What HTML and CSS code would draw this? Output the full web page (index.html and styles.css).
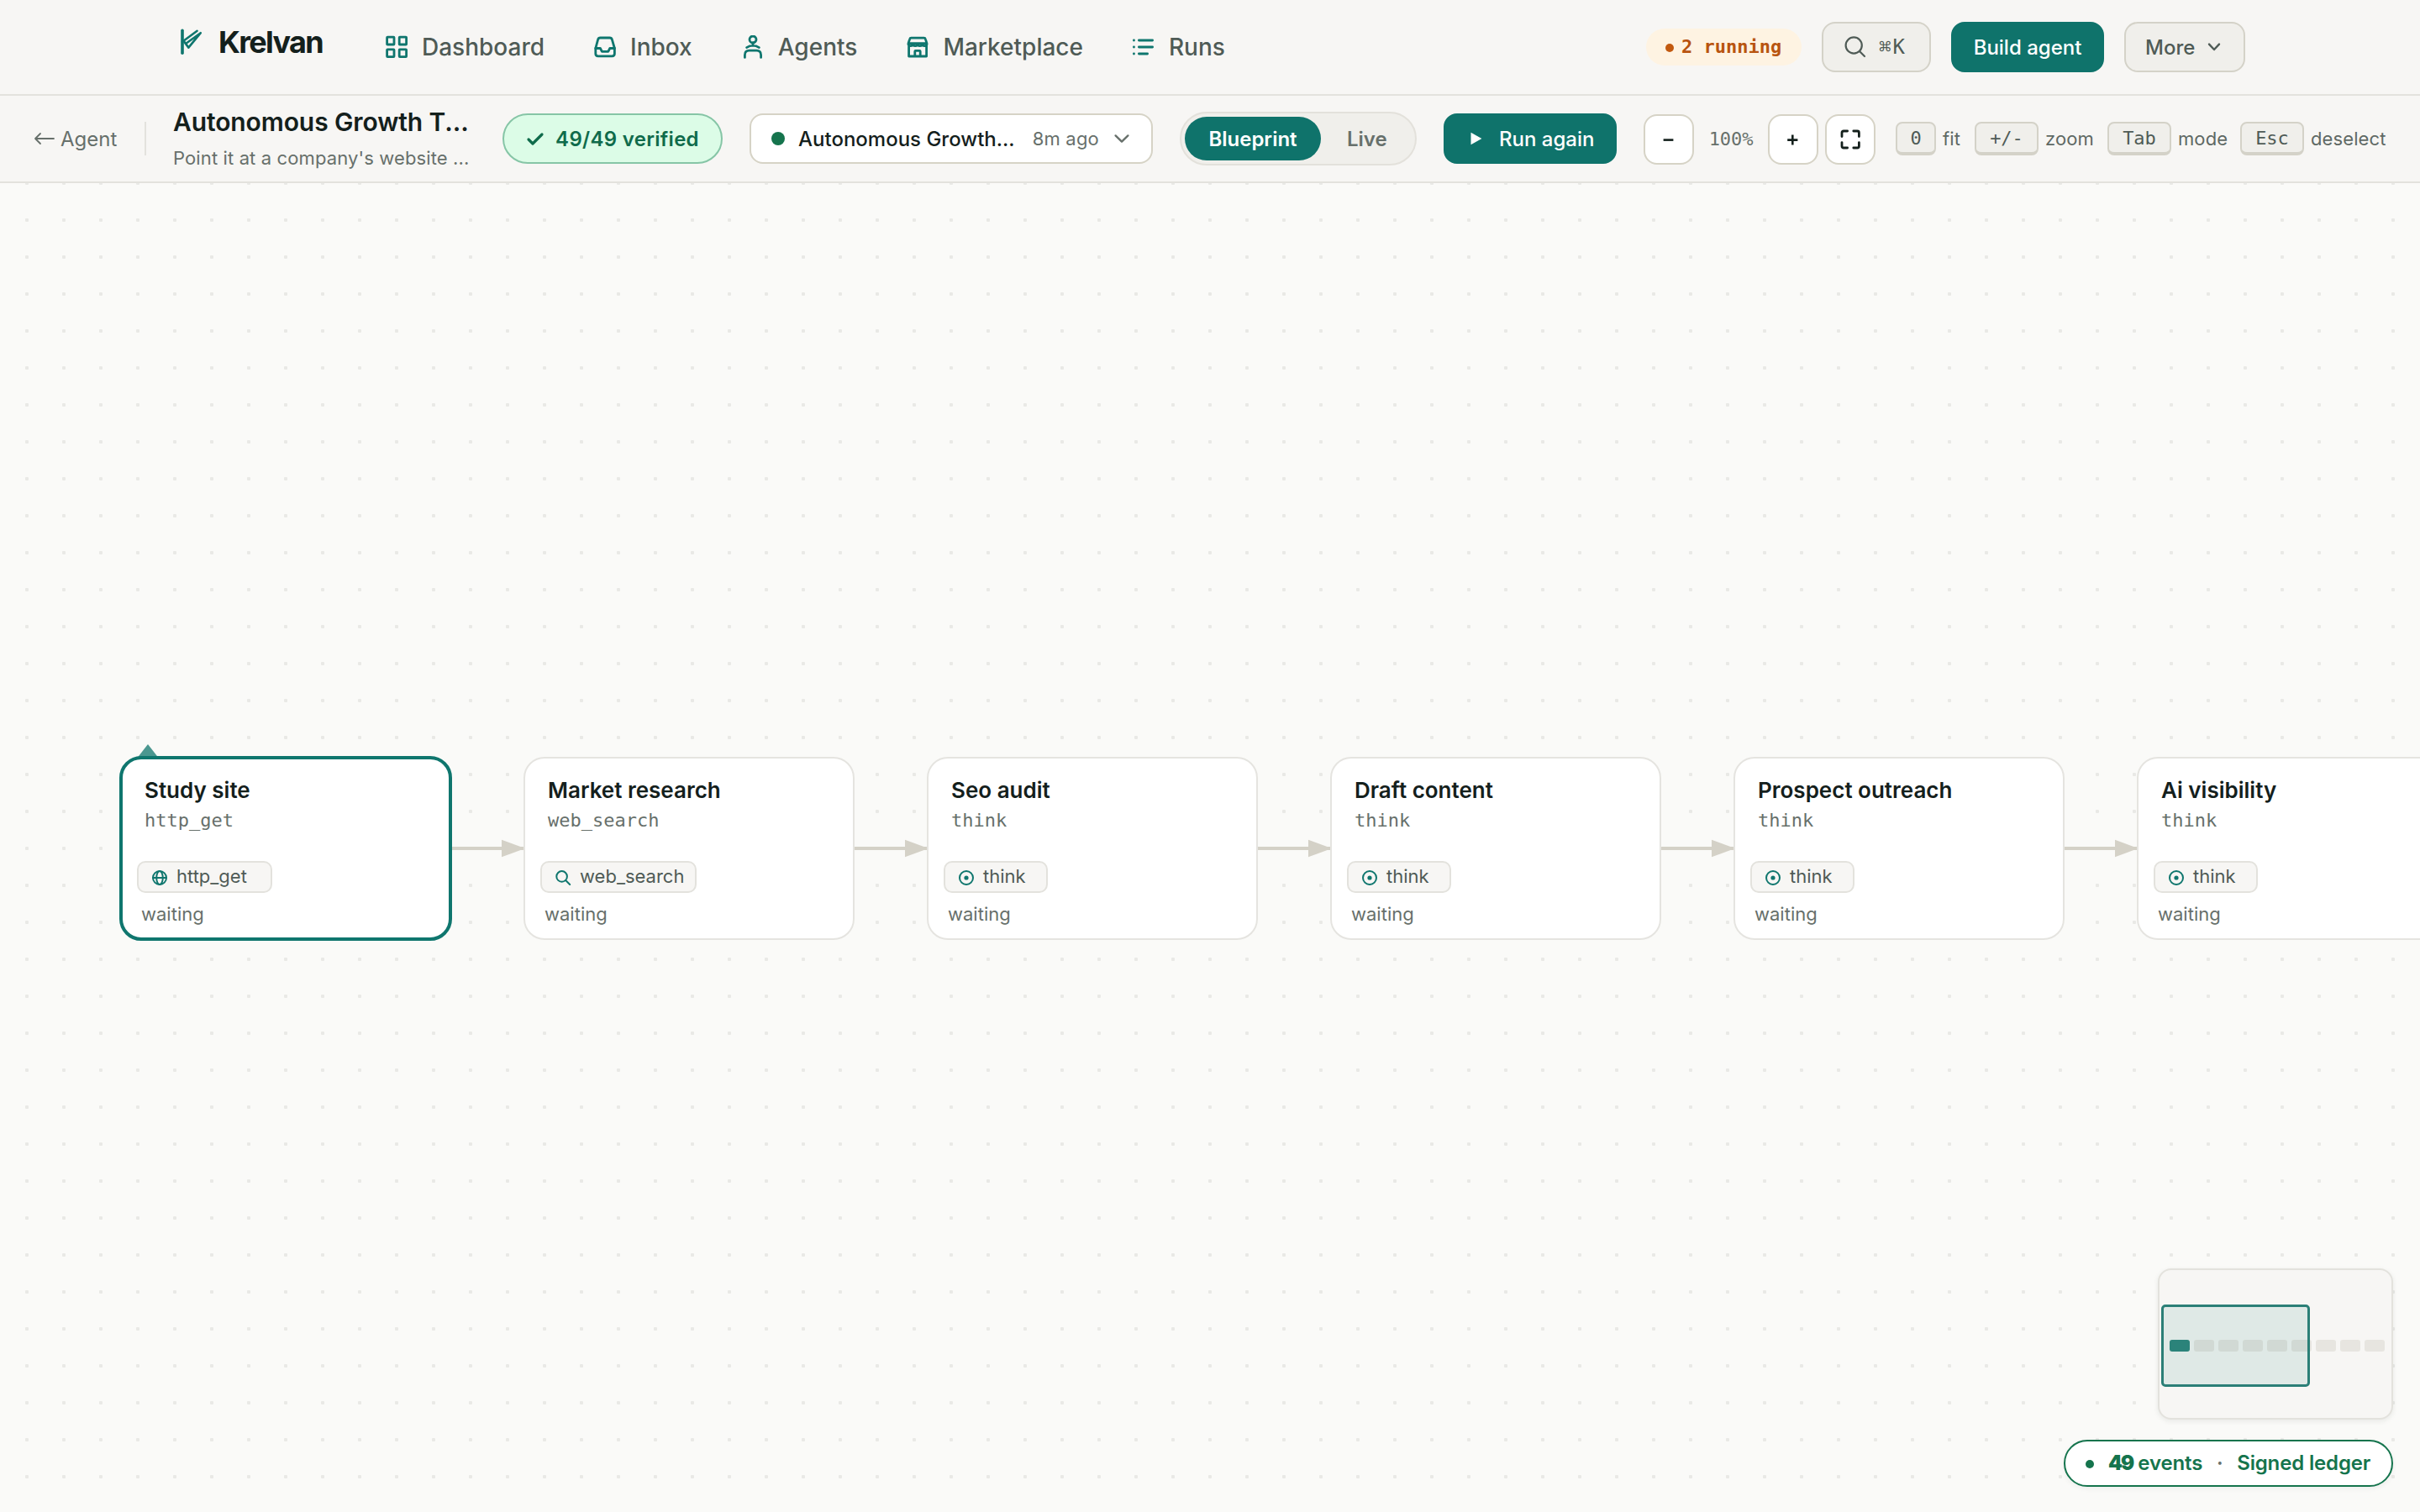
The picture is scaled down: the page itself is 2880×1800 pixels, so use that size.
FILE: index.html
```html
<!DOCTYPE html>
<html lang="en">
<head>
    <meta charset="UTF-8">
    <meta name="viewport" content="width=device-width, initial-scale=1.0">
    <title>Krelvan - Autonomous Growth Team</title>
    <link rel="stylesheet" href="styles.css">
</head>
<body>
    <svg class="sprite" width="0" height="0">
        <symbol id="i-think" viewBox="0 0 20 20">
            <circle cx="10" cy="10" r="8"/>
            <circle cx="10" cy="10" r="2.6" fill="currentColor" stroke="none"/>
        </symbol>
        <symbol id="i-globe" viewBox="0 0 20 20">
            <circle cx="10" cy="10" r="8"/>
            <ellipse cx="10" cy="10" rx="3.8" ry="8"/>
            <path d="M2 10h16"/>
        </symbol>
        <symbol id="i-search" viewBox="0 0 20 20">
            <circle cx="8.6" cy="8.4" r="6.3"/>
            <path d="M13.2 13l5 5"/>
        </symbol>
    </svg>

    <header class="header">
        <a class="logo">
            <svg class="logo-mark" viewBox="0 0 28 32">
                <path class="logo-stem" d="M2 2.2v27"/>
                <path d="M2 15.8L19.6 2.8M4 15.4L9.4 22.6L23.8 5.2L6 18"/>
            </svg>
            <span class="logo-text">Krelvan</span>
        </a>
        <nav class="nav">
            <a class="nav-item">
                <svg class="nav-icon" viewBox="0 0 28 28">
                    <rect x="2.6" y="2.2" width="8.4" height="8.8" rx="0.6"/>
                    <rect x="17.2" y="2.2" width="8.4" height="8.8" rx="0.6"/>
                    <rect x="2.6" y="16.8" width="8.4" height="8.8" rx="0.6"/>
                    <rect x="17.2" y="16.8" width="8.4" height="8.8" rx="0.6"/>
                </svg>
                Dashboard
            </a>
            <a class="nav-item">
                <svg class="nav-icon" viewBox="0 0 28 28">
                    <path d="M2.8 15.5L5.6 5.2Q6.2 3 8.4 3H19.6Q21.8 3 22.4 5.2L25.4 15.5V21.8Q25.4 24.8 22.4 24.8H5.8Q2.8 24.8 2.8 21.8Z"/>
                    <path d="M2.8 15.5H8.4L10.4 19.4H17.8L19.8 15.5H25.4"/>
                </svg>
                Inbox
            </a>
            <a class="nav-item">
                <svg class="nav-icon" viewBox="0 0 28 28">
                    <circle cx="14" cy="5" r="4"/>
                    <path d="M14 9v3.4M6.6 14.6Q14 9.8 21.4 14.6M4.4 26.4V23.4Q4.4 18.2 9.6 18.2H18.4Q23.6 18.2 23.6 23.4V26.4"/>
                </svg>
                Agents
            </a>
            <a class="nav-item">
                <svg class="nav-icon" viewBox="0 0 28 28">
                    <path d="M3 9.6L4.6 4.6Q5 3.2 6.4 3.2H21.6Q23 3.2 23.4 4.6L25 9.6ZM3 9.6V11Q5.6 14.4 8.4 11Q11.2 14.4 14 11Q16.8 14.4 19.6 11Q22.4 14.4 25 11V9.6M3.6 12V25H24.6V12M10.8 25V19.2Q10.8 18.4 11.6 18.4H16.4Q17.2 18.4 17.2 19.2V25"/>
                </svg>
                Marketplace
            </a>
            <a class="nav-item">
                <svg class="nav-icon" viewBox="0 0 28 28">
                    <path d="M8.4 6H24.6M8.4 14H24.6M8.4 22H18.6M2.4 6h.1M2.4 14h.1M2.4 22h.1"/>
                </svg>
                Runs
            </a>
        </nav>
        <div class="header-actions">
            <span class="running"><i class="running-dot"></i>2 running</span>
            <button class="btn btn-search">
                <svg class="search-icon" viewBox="0 0 28 28">
                    <circle cx="12.2" cy="12" r="9.6"/>
                    <path d="M19 19l6 6"/>
                </svg>
                <span class="shortcut">⌘K</span>
            </button>
            <button class="btn btn-primary btn-build">Build agent</button>
            <button class="btn btn-more">
                More
                <svg class="chevron" viewBox="0 0 20 20"><path d="M4 6.6l6 6.4l6-6.4"/></svg>
            </button>
        </div>
    </header>

    <div class="toolbar">
        <a class="back">
            <svg class="back-arrow" viewBox="0 0 26 20"><path d="M24 10H2M8 4L2 10L8 16"/></svg>
            Agent
        </a>
        <div class="divider"></div>
        <div class="title-block">
            <h1 class="title">Autonomous Growth T...</h1>
            <p class="subtitle">Point it at a company's website ...</p>
        </div>
        <div class="verified">
            <svg class="check" viewBox="0 0 22 20"><path d="M3 11l5 5L19 5"/></svg>
            49/49 verified
        </div>
        <div class="run-select">
            <i class="run-dot"></i>
            <span class="run-name">Autonomous Growth...</span>
            <span class="run-time">8m ago</span>
            <svg class="chevron" viewBox="0 0 20 20"><path d="M2.6 6.4l7.4 7.2l7.4-7.2"/></svg>
        </div>
        <div class="mode">
            <button class="mode-btn mode-active">Blueprint</button>
            <button class="mode-btn">Live</button>
        </div>
        <button class="btn btn-primary btn-run">
            <svg class="play" viewBox="0 0 14 16"><path d="M0.5 0.8L13.4 8L0.5 15.2Z"/></svg>
            Run again
        </button>
        <div class="zoom">
            <button class="zoom-btn"><svg class="zoom-icon" viewBox="0 0 28 28"><path d="M7.6 14.6H19.4"/></svg></button>
            <span class="zoom-value">100%</span>
            <button class="zoom-btn"><svg class="zoom-icon" viewBox="0 0 28 28"><path d="M7.2 14.6H19.4M13.3 8.6V20.6"/></svg></button>
            <button class="zoom-btn"><svg class="zoom-icon fit-icon" viewBox="0 0 28 28"><path d="M4 10.6V6Q4 4 6 4H10.6M17.8 4H22.4Q24.4 4 24.4 6V10.6M24.4 17.6V22Q24.4 24 22.4 24H17.8M10.6 24H6Q4 24 4 22V17.6"/></svg></button>
        </div>
        <div class="hints">
            <kbd class="key key-small">0</kbd><span class="hint hint-fit">fit</span>
            <kbd class="key">+/-</kbd><span class="hint hint-zoom">zoom</span>
            <kbd class="key">Tab</kbd><span class="hint hint-mode">mode</span>
            <kbd class="key">Esc</kbd><span class="hint">deselect</span>
        </div>
    </div>

    <main class="canvas">
        <svg class="edges" viewBox="0 0 2880 1582">
            <defs>
                <marker id="arrow" markerUnits="userSpaceOnUse" markerWidth="28" markerHeight="22" refX="27" refY="11" orient="auto">
                    <path d="M0 0.7L28 11L0 21.3Z" fill="#d4d1c7" stroke="none"/>
                </marker>
            </defs>
            <path class="entry" d="M176 668L190 686H162Z"/>
            <path class="edge" d="M536 792H624"/>
            <path class="edge" d="M1016 792H1104"/>
            <path class="edge" d="M1496 792H1584"/>
            <path class="edge" d="M1976 792H2064"/>
            <path class="edge" d="M2456 792H2544"/>
        </svg>

        <div class="node node-1 selected">
            <h2 class="node-title">Study site</h2>
            <p class="node-type">http_get</p>
            <span class="chip chip-http"><svg class="chip-icon"><use href="#i-globe"/></svg>http_get</span>
            <p class="node-status">waiting</p>
        </div>
        <div class="node node-2">
            <h2 class="node-title">Market research</h2>
            <p class="node-type">web_search</p>
            <span class="chip chip-web"><svg class="chip-icon"><use href="#i-search"/></svg>web_search</span>
            <p class="node-status">waiting</p>
        </div>
        <div class="node node-3">
            <h2 class="node-title">Seo audit</h2>
            <p class="node-type">think</p>
            <span class="chip chip-think"><svg class="chip-icon"><use href="#i-think"/></svg>think</span>
            <p class="node-status">waiting</p>
        </div>
        <div class="node node-4">
            <h2 class="node-title">Draft content</h2>
            <p class="node-type">think</p>
            <span class="chip chip-think"><svg class="chip-icon"><use href="#i-think"/></svg>think</span>
            <p class="node-status">waiting</p>
        </div>
        <div class="node node-5">
            <h2 class="node-title">Prospect outreach</h2>
            <p class="node-type">think</p>
            <span class="chip chip-think"><svg class="chip-icon"><use href="#i-think"/></svg>think</span>
            <p class="node-status">waiting</p>
        </div>
        <div class="node node-6">
            <h2 class="node-title">Ai visibility</h2>
            <p class="node-type">think</p>
            <span class="chip chip-think"><svg class="chip-icon"><use href="#i-think"/></svg>think</span>
            <p class="node-status">waiting</p>
        </div>

        <div class="overlay">
            <div class="minimap">
                <div class="mini-nodes">
                    <i class="mini-node mini-active"></i>
                    <i class="mini-node"></i>
                    <i class="mini-node"></i>
                    <i class="mini-node"></i>
                    <i class="mini-node"></i>
                    <i class="mini-node"></i>
                    <i class="mini-node"></i>
                    <i class="mini-node"></i>
                    <i class="mini-node"></i>
                </div>
                <div class="mini-view"></div>
            </div>
            <div class="ledger">
                <i class="ledger-dot"></i>
                <span><b class="ledger-count">49</b> events</span>
                <span class="ledger-sep">·</span>
                <span>Signed ledger</span>
            </div>
        </div>
    </main>
</body>
</html>
```
FILE: styles.css
```css
* {
    box-sizing: border-box;
}

body {
    margin: 0;
    height: 1800px;
    display: flex;
    flex-direction: column;
    overflow: hidden;
    font-family: Inter, "Liberation Sans", sans-serif;
    color: #14201c;
    background-color: #fafaf8;
}

h1, h2, p {
    margin: 0;
}

button {
    font-family: inherit;
    padding: 0;
    cursor: pointer;
}

svg {
    fill: none;
    stroke: currentColor;
    stroke-linecap: round;
    stroke-linejoin: round;
    flex: none;
}

.sprite {
    display: none;
}

/* Header */
.header {
    height: 114px;
    flex: none;
    display: flex;
    align-items: center;
    padding: 0 208px;
    background-color: #f7f6f4;
    border-bottom: 2px solid #e3e2dd;
}

.logo {
    width: 250px;
    display: flex;
    align-items: center;
    padding: 0 0 12px 7px;
}

.logo-mark {
    width: 28px;
    height: 32px;
    color: #0f766e;
    stroke-width: 2.6;
}

.logo-stem {
    stroke-width: 3.6;
}

.logo-text {
    margin-left: 17px;
    font-size: 36px;
    line-height: 40px;
    font-weight: 700;
    letter-spacing: -1.7px;
}

.nav {
    display: flex;
    gap: 58px;
}

.nav-item {
    display: flex;
    align-items: center;
    gap: 16px;
    font-size: 28px;
    line-height: 36px;
    font-weight: 500;
    color: #4f5b56;
}

.nav-icon {
    width: 28px;
    height: 28px;
    color: #0f766e;
    stroke-width: 2.8;
}

.header-actions {
    margin-left: auto;
    display: flex;
    align-items: center;
    gap: 24px;
}

.running {
    width: 185px;
    height: 44px;
    display: flex;
    align-items: center;
    padding: 0 0 2px 23px;
    gap: 9px;
    border-radius: 22px;
    background-color: #fef3e2;
    color: #b8540f;
    font-family: "DejaVu Sans Mono", "Liberation Mono", monospace;
    font-size: 22px;
    font-weight: 700;
}

.running-dot {
    width: 10px;
    height: 10px;
    margin-top: 4px;
    border-radius: 50%;
    background-color: #c2590f;
}

.btn {
    height: 60px;
    display: flex;
    align-items: center;
    border: 2px solid #d4d2c8;
    border-radius: 16px;
    background-color: #f0efeb;
    color: #4f5b56;
    font-size: 24px;
    font-weight: 500;
    white-space: nowrap;
}

.btn-primary {
    border-color: #0f736b;
    background-color: #0f736b;
    color: #fff;
}

.btn-search {
    width: 130px;
    padding-left: 24px;
    gap: 14px;
}

.search-icon {
    width: 28px;
    height: 28px;
    stroke-width: 2.2;
}

.shortcut {
    font-family: "DejaVu Sans Mono", monospace;
    font-size: 24px;
    font-weight: 400;
    letter-spacing: 2px;
}

.btn-build {
    width: 182px;
    justify-content: center;
}

.btn-more {
    width: 144px;
    padding-left: 23px;
    gap: 13px;
}

.chevron {
    width: 20px;
    height: 20px;
    stroke-width: 2.4;
}

/* Toolbar */
.toolbar {
    height: 104px;
    flex: none;
    display: flex;
    align-items: center;
    padding: 0 40px;
    background-color: #f7f6f4;
    border-bottom: 2px solid #e3e2dd;
    white-space: nowrap;
}

.back {
    width: 132px;
    display: flex;
    align-items: center;
    gap: 6px;
    font-size: 24px;
    color: #67706b;
}

.back-arrow {
    width: 26px;
    height: 20px;
    stroke-width: 1.8;
}

.divider {
    width: 2px;
    height: 40px;
    margin-right: 32px;
    background-color: #e3e2dd;
}

.title-block {
    width: 392px;
}

.title {
    font-size: 30px;
    line-height: 38px;
    font-weight: 600;
    letter-spacing: -0.1px;
}

.subtitle {
    margin: 10px 0 3px;
    font-size: 22px;
    line-height: 28px;
    letter-spacing: 0.12px;
    color: #67706b;
}

.verified {
    width: 262px;
    height: 60px;
    margin-right: 32px;
    display: flex;
    align-items: center;
    justify-content: center;
    gap: 13px;
    border: 2px solid #86c5a6;
    border-radius: 30px;
    background-color: #dcfce7;
    color: #0f6b4b;
    font-size: 24px;
    font-weight: 600;
    letter-spacing: 0.3px;
}

.check {
    width: 22px;
    height: 20px;
    stroke-width: 3.2;
}

.run-select {
    width: 480px;
    height: 60px;
    margin-right: 32px;
    display: flex;
    align-items: center;
    padding: 0 25px 0 24px;
    border: 2px solid #d6d3c6;
    border-radius: 16px;
    background-color: #fff;
    color: #67706b;
}

.run-dot {
    width: 16px;
    height: 16px;
    border-radius: 50%;
    background-color: #15744d;
}

.run-name {
    margin-left: 16px;
    color: #14201c;
    font-size: 24px;
    font-weight: 500;
}

.run-time {
    margin-left: auto;
    margin-right: 17px;
    font-size: 22px;
    letter-spacing: 0.2px;
}

.mode {
    width: 282px;
    height: 64px;
    margin-right: 32px;
    display: flex;
    align-items: center;
    padding: 0 4px;
    border: 2px solid #e3e1db;
    border-radius: 32px;
    background-color: #f0efeb;
}

.mode-btn {
    flex: none;
    height: 52px;
    padding: 0 31px;
    border: none;
    border-radius: 26px;
    background: none;
    color: #67706b;
    font-size: 24px;
    font-weight: 600;
}

.mode-active {
    width: 162px;
    padding: 0;
    background-color: #0f736b;
    color: #fff;
}

.btn-run {
    width: 206px;
    margin-right: 32px;
    padding-left: 30px;
    gap: 20px;
}

.play {
    width: 14px;
    height: 16px;
    fill: #fff;
    stroke: none;
}

.zoom {
    display: flex;
    align-items: center;
    gap: 8px;
    margin: 2px 24px 0 0;
}

.zoom-btn {
    width: 60px;
    height: 60px;
    display: flex;
    align-items: center;
    justify-content: center;
    border: 2px solid #d6d3c6;
    border-radius: 16px;
    background-color: #fff;
    color: #14201c;
}

.zoom-icon {
    width: 28px;
    height: 28px;
    stroke-width: 2.6;
    stroke-linecap: butt;
}

.fit-icon {
    stroke-width: 2.8;
    stroke-linecap: round;
}

.zoom-value {
    width: 72px;
    margin-top: -2px;
    text-align: center;
    font-family: "DejaVu Sans Mono", monospace;
    font-size: 22px;
    letter-spacing: -0.1px;
    color: #67706b;
}

.hints {
    flex: 1;
    display: flex;
    align-items: center;
    font-size: 22px;
    letter-spacing: 0.1px;
    color: #5f6964;
}

.key {
    width: 76px;
    height: 40px;
    border: 2px solid #d4d2c8;
    border-bottom-width: 4px;
    border-radius: 8px;
    background-color: #f0efeb;
    color: #4f5b56;
    text-align: center;
    font-family: "DejaVu Sans Mono", monospace;
    font-size: 22px;
    line-height: 35px;
    letter-spacing: 0;
}

.key-small {
    width: 48px;
}

.hint {
    margin-left: 8px;
}

.hint-fit {
    width: 38px;
}

.hint-zoom {
    width: 74px;
}

.hint-mode {
    width: 74px;
}

/* Canvas */
.canvas {
    position: relative;
    flex: 1;
    overflow: hidden;
    background-image: radial-gradient(circle at 22px 22px, #e9e9e6 2px, transparent 2.5px);
    background-size: 44px 44px;
    background-position: 10px 22px;
}

.edges {
    position: absolute;
    left: 0;
    top: 0;
    width: 2880px;
    height: 1582px;
}

.edge {
    stroke: #d4d1c7;
    stroke-width: 4;
    stroke-linecap: butt;
    marker-end: url(#arrow);
}

.entry {
    fill: #4b9790;
    stroke: none;
}

.node {
    position: absolute;
    top: 683px;
    width: 394px;
    height: 218px;
    padding: 22px 0 0 27px;
    border: 2px solid #e5e4e0;
    border-radius: 25px;
    background-color: #fff;
}

.node-1 { left: 143px; }
.node-2 { left: 623px; }
.node-3 { left: 1103px; }
.node-4 { left: 1583px; }
.node-5 { left: 2063px; }
.node-6 { left: 2543px; }

.selected {
    margin: -1px;
    width: 396px;
    height: 220px;
    padding: 21px 0 0 26px;
    border: 4px solid #0f766e;
    border-radius: 26px;
}

.node-title {
    font-size: 26px;
    line-height: 32px;
    font-weight: 600;
}

.node-type {
    margin-top: 6px;
    font-family: "DejaVu Sans Mono", monospace;
    font-size: 22px;
    line-height: 28px;
    color: #67706b;
}

.chip {
    height: 38px;
    margin: 34px 0 0 -9px;
    display: flex;
    align-items: center;
    gap: 10px;
    padding: 0 0 2px 15px;
    border: 2px solid #e3e2dd;
    border-radius: 10px;
    background-color: #f7f6f4;
    color: #4f5b56;
    font-size: 22px;
    line-height: 26px;
}

.chip-http { width: 161px; }
.chip-web { width: 186px; }
.chip-think { width: 124px; }

.chip-icon {
    width: 20px;
    height: 20px;
    margin-top: 3px;
    color: #0f766e;
    stroke-width: 2;
}

.node-status {
    margin: 11px 0 0 -4px;
    font-size: 22px;
    line-height: 28px;
    color: #67706b;
}

/* Minimap and ledger sit over the canvas */
.overlay {
    position: absolute;
    right: 32px;
    bottom: 30px;
    display: flex;
    flex-direction: column;
    align-items: flex-end;
    gap: 24px;
}

.minimap {
    position: relative;
    width: 280px;
    height: 180px;
    display: flex;
    align-items: center;
    padding-left: 12px;
    border: 2px solid #e3e2dd;
    border-radius: 16px;
    background-color: #f7f6f4;
    box-shadow: 0 2px 6px rgba(20, 32, 28, 0.08);
}

.mini-nodes {
    display: flex;
    gap: 5px;
    margin-top: 4px;
}

.mini-node {
    width: 24px;
    height: 14px;
    border-radius: 3px;
    background-color: #e7e5e0;
}

.mini-active {
    background-color: #2e857c;
}

.mini-view {
    position: absolute;
    left: 2px;
    top: 41px;
    width: 177px;
    height: 98px;
    border: 3px solid #2b7f77;
    border-radius: 5px;
    background-color: rgba(15, 118, 110, 0.1);
}

.ledger {
    width: 392px;
    height: 56px;
    display: flex;
    align-items: center;
    padding: 0 0 1px 24px;
    border: 2px solid #15744d;
    border-radius: 28px;
    background-color: #fff;
    box-shadow: 0 2px 6px rgba(20, 32, 28, 0.06);
    color: #15744d;
    font-size: 24px;
    font-weight: 600;
    letter-spacing: -0.15px;
    white-space: nowrap;
}

.ledger-dot {
    width: 10px;
    height: 10px;
    margin: 2px 17px 0 0;
    border-radius: 50%;
    background-color: #15744d;
}

.ledger-count {
    letter-spacing: -1.8px;
}

.ledger-sep {
    width: 41px;
    text-align: center;
    color: #67706b;
}
```
